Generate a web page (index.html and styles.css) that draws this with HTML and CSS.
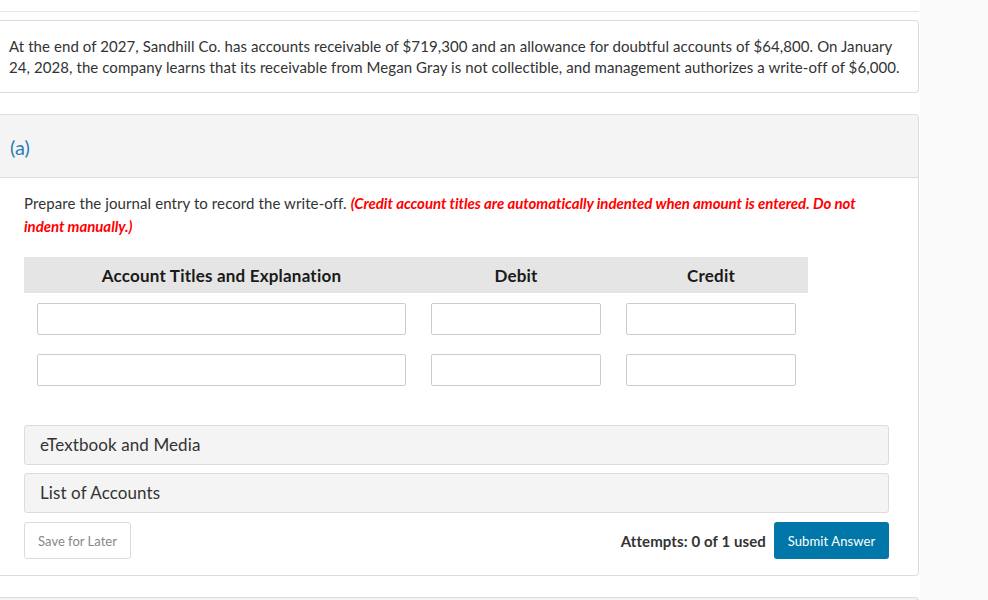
FILE: index.html
```html
<!DOCTYPE html>
<html>
<head>
<meta charset="utf-8">
<link rel="stylesheet" href="styles.css">
</head>
<body>
<div class="page">
  <main class="main">
    <div class="prev-line"></div>
    <section class="card question">
      <p>At the end of 2027, Sandhill Co. has accounts receivable of $719,300 and an allowance for doubtful accounts of $64,800. On January 24, 2028, the company learns that its receivable from Megan Gray is not collectible, and management authorizes a write-off of $6,000.</p>
    </section>
    <section class="card part">
      <header class="part-head">(a)</header>
      <div class="part-body">
        <p class="instr">Prepare the journal entry to record the write-off. <em class="warn">(Credit account titles are automatically indented when amount is entered. Do not indent manually.)</em></p>
        <div class="journal">
          <div class="jrow jhead">
            <div class="c-acct">Account Titles and Explanation</div>
            <div class="c-amt">Debit</div>
            <div class="c-amt">Credit</div>
          </div>
          <div class="jrow">
            <div class="c-acct"><input class="inp" type="text"></div>
            <div class="c-amt"><input class="inp" type="text"></div>
            <div class="c-amt"><input class="inp" type="text"></div>
          </div>
          <div class="jrow">
            <div class="c-acct"><input class="inp" type="text"></div>
            <div class="c-amt"><input class="inp" type="text"></div>
            <div class="c-amt"><input class="inp" type="text"></div>
          </div>
        </div>
        <div class="resource">eTextbook and Media</div>
        <div class="resource">List of Accounts</div>
        <div class="actions">
          <button class="btn-save">Save for Later</button>
          <div class="right">
            <span class="attempts">Attempts: 0 of 1 used</span>
            <button class="btn-submit">Submit Answer</button>
          </div>
        </div>
      </div>
    </section>
    <section class="card next"></section>
  </main>
  <aside class="side"></aside>
</div>
</body>
</html>
```

FILE: styles.css
```css
* { box-sizing: border-box; }
html, body { margin: 0; padding: 0; }
body {
  font-family: Lato, "Open Sans", sans-serif;
  color: #333;
  background: #f9f9f9;
}
.page { display: flex; height: 600px; overflow: hidden; }
.main { width: 920px; background: #fff; padding-right: 1px; }
.side { flex: 1; background: #f9f9f9; }

.prev-line { height: 12px; border-bottom: 1px solid #e6e6e6; }

.card {
  border: 1px solid #dcdcdc;
  border-left: none;
  border-radius: 0 4px 4px 0;
  background: #fff;
}
.question { margin-top: 8px; padding: 15px 6px 14px 9px; }
.question p { margin: 0; font-size: 15px; line-height: 21px; letter-spacing: 0.075px; }

.part { margin-top: 21px; }
.part-head {
  height: 63px;
  background: #f4f4f4;
  border-bottom: 1px solid #dcdcdc;
  color: #2d7cb5;
  font-size: 20px;
  padding: 20px 0 0 10px;
  line-height: 24px;
  border-radius: 0 4px 0 0;
}
.part-body { padding: 14px 29px 16px 24px; }
.instr { margin: 0; font-size: 15px; line-height: 23px; padding-right: 20px; letter-spacing: 0.09px; }
.warn { color: #f00; font-weight: 700; font-style: italic; letter-spacing: -0.05px; }

.journal { width: 784px; margin-top: 19px; }
.jrow { display: flex; padding: 10px 0 9px; }
.jhead { background: #e5e5e5; padding: 0; height: 36px; align-items: center; font-weight: 700; font-size: 17px; letter-spacing: 0.2px; color: #1a1a1a; }
.c-acct { width: 394px; padding: 0 12px 0 13px; text-align: center; }
.c-amt { width: 195px; padding: 0 12px 0 13px; text-align: center; }
.inp {
  display: block;
  width: 100%;
  height: 32px;
  border: 1px solid #ccc;
  border-radius: 2px;
  background: #fff;
  margin: 0;
}

.resource {
  margin-top: 8px;
  height: 40px;
  background: #f4f4f4;
  border: 1px solid #dcdcdc;
  border-radius: 3px;
  padding: 0 15px;
  font-size: 17px;
  line-height: 38px;
  color: #333;
  letter-spacing: 0.1px;
}
.journal + .resource { margin-top: 30px; }

.actions { display: flex; justify-content: space-between; align-items: center; margin-top: 9px; }
.btn-save {
  height: 37px;
  width: 107px;
  border: 1px solid #dcdcdc;
  border-radius: 3px;
  background: #fff;
  color: #888;
  font-family: Lato, sans-serif;
  font-size: 13px;
  padding: 0;
}
.right { display: flex; align-items: center; gap: 8px; }
.attempts { font-weight: 700; font-size: 15px; color: #333; letter-spacing: 0.1px; }
.btn-submit {
  height: 37px;
  width: 115px;
  border: none;
  border-radius: 3px;
  background: #0077a8;
  color: #fff;
  font-family: Lato, sans-serif;
  font-size: 13px;
  letter-spacing: 0.1px;
  padding: 0;
}

.next { margin-top: 21px; height: 40px; background: #f4f4f4; }
```
